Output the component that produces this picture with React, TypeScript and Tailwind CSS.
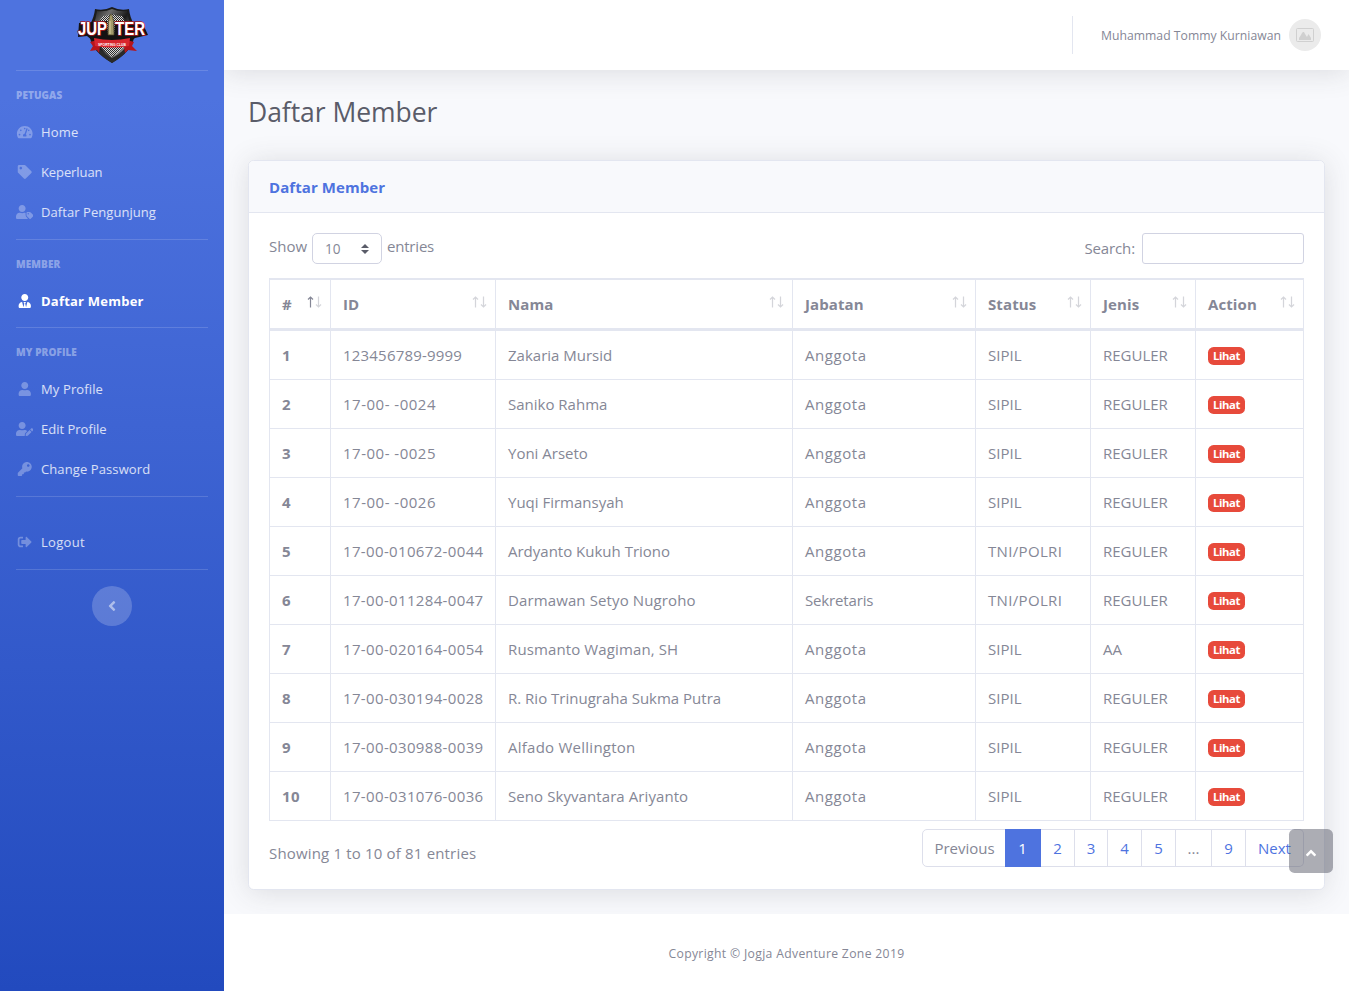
import React from "react";
import {
  FaTachometerAlt, FaTag, FaUserTag, FaUserTie, FaUser, FaUserEdit, FaKey,
  FaSignOutAlt, FaAngleLeft, FaAngleUp,
} from "react-icons/fa";
import type { IconType } from "react-icons";

function Logo() {
  return (
    <svg width="74" height="58" viewBox="-2 0 74 58" className="-ml-px overflow-visible">
      <defs>
        <linearGradient id="steel" x1="0" y1="0" x2="1" y2="1">
          <stop offset="0" stopColor="#161616" />
          <stop offset="0.25" stopColor="#6d6d6d" />
          <stop offset="0.5" stopColor="#1a1a1a" />
          <stop offset="0.8" stopColor="#8a8a8a" />
          <stop offset="1" stopColor="#222" />
        </linearGradient>
        <pattern id="mesh" width="2" height="2" patternUnits="userSpaceOnUse">
          <rect width="2" height="2" fill="#2b2b2b" />
          <rect width="1" height="1" fill="#d8d8d8" />
          <rect x="1" y="1" width="1" height="1" fill="#d8d8d8" />
        </pattern>
      </defs>
      <path d="M18 3 Q27 5 35 1 Q43 5 52 3 Q53 12 57 18 L57 32 Q54 46 35 57 Q16 46 13 32 L13 18 Q17 12 18 3 Z" fill="#1c1c1c" />
      <path d="M20 5 Q28 6 35 3 Q42 6 50 5 Q51 13 54 19 L54 32 Q51 44 35 54.5 Q19 44 16 32 L16 19 Q19 13 20 5 Z" fill="url(#steel)" />
      <path d="M26 10 Q31 10 35 8 Q39 10 45 10 L51 20 V32 Q48 43 35 51 Q22 43 19 32 V20 Z" fill="url(#mesh)" />
      <path d="M35 57 Q20 48 15 38 L22 42 Q27 48 35 52 Q43 48 48 42 L55 38 Q50 48 35 57 Z" fill="#2a2a2a" />
      <path d="M2 17 L30 15 L31 28 L37 28 L38 15 L65 16 L71 29 L58 32 L54 35 L16 35 L10 30 L1 31 Z" fill="#141212" />
      <path d="M20 34 L13 36 L16 40 L13 45 L20 44 L22 47 L23 40 Z M50 34 L57 36 L55 40 L60 45 L51 44 L48 47 L47 40 Z" fill="#b7141b" />
      <path d="M17 32 Q35 36 53 32 L52 40 Q35 43 18 40 Z" fill="#d8262e" />
      <text x="21" y="39.5" fontFamily="Liberation Sans" fontWeight="700" fontSize="4.4" fill="#fff" textLength="28" lengthAdjust="spacingAndGlyphs">SPORTING CLUB</text>
      <g fontFamily="Liberation Sans" fontWeight="700" fontSize="18" fill="#fff" stroke="#a8171d" strokeWidth="1.6" style={{ paintOrder: "stroke" }}>
        <text x="1" y="28.5" textLength="29" lengthAdjust="spacingAndGlyphs">JUP</text>
        <text x="38" y="28.5" textLength="30" lengthAdjust="spacingAndGlyphs">TER</text>
      </g>
      <path d="M31.5 15 Q32.5 9 34 8 Q35.5 9 36.5 15 L37 29 L31 29 Z" fill="#a39a6a" stroke="#4a4226" strokeWidth="0.7" />
      <path d="M33 15 V28" stroke="#d9d2a4" strokeWidth="1" />
    </svg>
  );
}

function SideItem({ icon: Icon, label, active = false, tracking }: { icon: IconType; label: string; active?: boolean; tracking: string }) {
  return (
    <a href="#" className={`flex h-10 items-center whitespace-nowrap text-[13px] ${active ? "font-bold text-white" : "text-white/80"}`}>
      <span className={`flex w-[17px] shrink-0 justify-center ${active ? "text-white" : "text-white/30"}`}>
        <Icon className="h-[14px] w-[17.5px] shrink-0" />
      </span>
      <span className={`ml-2 pt-[2px] ${tracking}`}>{label}</span>
    </a>
  );
}

function SideHeading({ children }: { children: React.ReactNode }) {
  return <div className="h-[41px] pt-4 text-[10px] leading-[16px] font-extrabold tracking-[0.08px] text-white/40 uppercase">{children}</div>;
}

function Divider() {
  return <hr className="h-px border-0 bg-white/15" />;
}

function SortArrows({ active = false }: { active?: boolean }) {
  return (
    <svg width="15" height="12" viewBox="0 0 15 12" fill="none" stroke="#858796" strokeWidth="1">
      <g opacity={active ? 1 : 0.35}>
        <path d="M3.5 11.5V1M1 3.5L3.5 1L6 3.5" strokeWidth="1.2" />
      </g>
      <g opacity="0.35">
        <path d="M11.5 0.5V11M9 8.5L11.5 11L14 8.5" strokeWidth="1.2" />
      </g>
    </svg>
  );
}

const columns = [
  { name: "#", width: "w-[61px]" },
  { name: "ID", width: "w-[165px]" },
  { name: "Nama", width: "w-[297px]" },
  { name: "Jabatan", width: "w-[183px]" },
  { name: "Status", width: "w-[115px]" },
  { name: "Jenis", width: "w-[105px]" },
  { name: "Action", width: "w-[109px]" },
];

const members = [
  ["123456789-9999", "Zakaria Mursid", "Anggota", "SIPIL", "REGULER"],
  ["17-00- -0024", "Saniko Rahma", "Anggota", "SIPIL", "REGULER"],
  ["17-00- -0025", "Yoni Arseto", "Anggota", "SIPIL", "REGULER"],
  ["17-00- -0026", "Yuqi Firmansyah", "Anggota", "SIPIL", "REGULER"],
  ["17-00-010672-0044", "Ardyanto Kukuh Triono", "Anggota", "TNI/POLRI", "REGULER"],
  ["17-00-011284-0047", "Darmawan Setyo Nugroho", "Sekretaris", "TNI/POLRI", "REGULER"],
  ["17-00-020164-0054", "Rusmanto Wagiman, SH", "Anggota", "SIPIL", "AA"],
  ["17-00-030194-0028", "R. Rio Trinugraha Sukma Putra", "Anggota", "SIPIL", "REGULER"],
  ["17-00-030988-0039", "Alfado Wellington", "Anggota", "SIPIL", "REGULER"],
  ["17-00-031076-0036", "Seno Skyvantara Ariyanto", "Anggota", "SIPIL", "REGULER"],
];

function cellTracking(value: string) {
  if (value === "123456789-9999") return "tracking-[0.2px]";
  if (value.startsWith("17-00- ")) return "tracking-[0.5px]";
  if (value.startsWith("17-")) return "tracking-[0.35px]";
  if (value === "Anggota") return "tracking-[0.55px]";
  if (value === "Sekretaris") return "tracking-[-0.15px]";
  if (value === "TNI/POLRI") return "tracking-[0.33px]";
  if (value === "Alfado Wellington") return "tracking-[0.25px]";
  if (value === "Rusmanto Wagiman, SH" || value === "Darmawan Setyo Nugroho") return "tracking-[0.12px]";
  if (value === "Seno Skyvantara Ariyanto") return "tracking-[0.08px]";
  return "";
}

const pages = [
  { label: "Previous", style: "w-[84px] rounded-l-[5px] border-l pl-px border-[#dddfeb] text-[#858796]" },
  { label: "1", style: "-ml-px w-[36px] border-[#4e73df] bg-[#4e73df] text-white" },
  { label: "2", style: "w-[34px] border-[#dddfeb] text-[#4e73df]" },
  { label: "3", style: "w-[33px] border-[#dddfeb] text-[#4e73df]" },
  { label: "4", style: "w-[34px] border-[#dddfeb] text-[#4e73df]" },
  { label: "5", style: "w-[34px] border-[#dddfeb] text-[#4e73df]" },
  { label: "...", style: "w-[36px] border-[#dddfeb] text-[#858796]" },
  { label: "9", style: "w-[34px] border-[#dddfeb] text-[#4e73df]" },
  { label: "Next", style: "w-[58px] rounded-r-[5px] border-[#dddfeb] text-[#4e73df]" },
];

export default function App() {
  return (
    <div className="relative flex h-[991px] w-[1349px] overflow-hidden bg-[#f8f9fc] font-['Open_Sans','Noto_Sans',sans-serif] text-[15px] text-[#858796]">
      <aside className="relative z-10 w-[224px] shrink-0 bg-[linear-gradient(180deg,#4e73df_10%,#224abe_100%)] px-4">
        <div className="flex h-[70px] justify-center pt-1.5"><Logo /></div>
        <Divider />
        <SideHeading>Petugas</SideHeading>
        <SideItem icon={FaTachometerAlt} label="Home" tracking="tracking-[0.2px]" />
        <SideItem icon={FaTag} label="Keperluan" tracking="tracking-[-0.1px]" />
        <SideItem icon={FaUserTag} label="Daftar Pengunjung" tracking="tracking-[0.06px]" />
        <div className="h-[7px]" />
        <Divider />
        <SideHeading>Member</SideHeading>
        <SideItem icon={FaUserTie} label="Daftar Member" active tracking="tracking-[0.22px]" />
        <div className="h-1.5" />
        <Divider />
        <SideHeading>My Profile</SideHeading>
        <SideItem icon={FaUser} label="My Profile" tracking="tracking-[0.12px]" />
        <SideItem icon={FaUserEdit} label="Edit Profile" tracking="" />
        <SideItem icon={FaKey} label="Change Password" tracking="tracking-[0.1px]" />
        <div className="h-[7px]" />
        <Divider />
        <div className="h-[25px]" />
        <SideItem icon={FaSignOutAlt} label="Logout" tracking="tracking-[0.3px]" />
        <div className="h-[7px]" />
        <Divider />
        <button className="mx-auto mt-4 flex size-10 items-center justify-center rounded-full bg-white/20 text-white/50">
          <FaAngleLeft size={16} />
        </button>
      </aside>

      <div className="flex min-w-0 flex-1 flex-col">
        <header className="flex h-[70px] shrink-0 items-center justify-end bg-white pr-7 shadow-[0_2.4px_28px_0_rgba(58,59,69,0.15)]">
          <div className="mr-7 h-[38px] w-px bg-[#e3e6f0]" />
          <span className="mt-[3px] mr-2 w-[180px] text-[12.2px] tracking-[0.02px] whitespace-nowrap">Muhammad Tommy Kurniawan</span>
          <span className="flex size-8 items-center justify-center rounded-full bg-[#ebebeb]">
            <svg width="18" height="14" viewBox="0 0 18 14">
              <rect x="0.5" y="0.5" width="17" height="13" rx="1" fill="none" stroke="#d0d0d0" />
              <path d="M3 12V10L5 7L6 5L7 4L8 4L9 6L11 9L12.5 6L15 10V12Z" fill="#d0d0d0" />
            </svg>
          </span>
        </header>

        <main className="h-[844px] shrink-0 px-6 pt-6">
          <h1 className="h-[66px] pt-px text-[26.5px] leading-[34px] tracking-[-0.05px] text-[#5a5c69]">Daftar Member</h1>
          <section className="h-[730px] w-[1077px] rounded-[5.6px] border border-[#e3e6f0] bg-white shadow-[0_2.4px_28px_0_rgba(58,59,69,0.15)]">
            <div className="flex h-[52px] items-center rounded-t-[5px] border-b border-[#e3e6f0] bg-[#f8f9fc] px-5 pt-0.5 font-bold tracking-[0.08px] text-[#4e73df]">Daftar Member</div>
            <div className="px-5 pt-5">
              <div className="flex h-[45px] items-start justify-between">
                <div className="flex">
                  <span className="mt-0.5 w-[43px] whitespace-nowrap">Show</span>
                  <span className="flex h-[31px] w-[70px] items-center justify-between rounded-[5px] border border-[#d1d3e2] pr-3 pl-3 text-[13.6px]">
                    <span className="pt-px">10</span>
                    <svg width="8" height="10" viewBox="0 0 8 10" fill="#5a5c69"><path d="M0 4L4 0L8 4ZM0 6L4 10L8 6Z" /></svg>
                  </span>
                  <span className="mt-0.5 ml-[5px] tracking-[-0.2px]">entries</span>
                </div>
                <div className="flex">
                  <span className="mt-1 mr-[7px] tracking-[-0.12px]">Search:</span>
                  <input className="h-[31px] w-[162px] rounded-[3px] border border-[#d1d3e2] bg-white" />
                </div>
              </div>
              <table className="w-[1035px] table-fixed border-separate border-spacing-0 text-left">
                <thead>
                  <tr className="h-[53px]">
                    {columns.map((c, i) => (
                      <th key={c.name} className={`${c.width} border-t-2 border-b-3 border-l border-[#e3e6f0] p-0 pr-2 pl-3 font-bold tracking-[0.1px] last:border-r`}>
                        <div className="flex items-center justify-between">
                          <span>{c.name}</span>
                          <span className="-mt-1"><SortArrows active={i === 0} /></span>
                        </div>
                      </th>
                    ))}
                  </tr>
                </thead>
                <tbody>
                  {members.map((m, i) => (
                    <tr key={m[0]} className="h-[49px]">
                      <td className="border-b border-l border-[#e3e6f0] p-0 pl-3 font-bold tracking-[0.3px]">{i + 1}</td>
                      {m.map((v, j) => (
                        <td key={j} className={`border-b border-l border-[#e3e6f0] p-0 pl-3 whitespace-nowrap ${cellTracking(v)}`}>{v}</td>
                      ))}
                      <td className="border-x border-b border-[#e3e6f0] p-0 pl-3">
                        <span className="mt-0.5 flex h-[18px] w-[37px] items-center justify-center rounded-[5.6px] bg-[#e74a3b] pt-px text-[11.3px] font-bold tracking-[-0.35px] text-white">Lihat</span>
                      </td>
                    </tr>
                  ))}
                </tbody>
              </table>
              <div className="flex justify-between pt-2">
                <span className="mt-[13px] tracking-[0.17px]">Showing 1 to 10 of 81 entries</span>
                <div className="flex h-[38px]">
                  {pages.map((p) => (
                    <a key={p.label} href="#" className={`flex items-center justify-center border-y border-r ${p.style}`}>{p.label}</a>
                  ))}
                </div>
              </div>
            </div>
          </section>
        </main>

        <footer className="flex h-[77px] shrink-0 items-center justify-center bg-white pt-[3px] text-[12.2px] tracking-[0.33px]">
          Copyright © Jogja Adventure Zone 2019
        </footer>
      </div>

      <a href="#" className="absolute right-4 bottom-[118px] flex size-11 items-center justify-center rounded-[5.6px] bg-[#5a5c69]/50 text-white">
        <FaAngleUp size={16} className="mt-1" />
      </a>
    </div>
  );
}
